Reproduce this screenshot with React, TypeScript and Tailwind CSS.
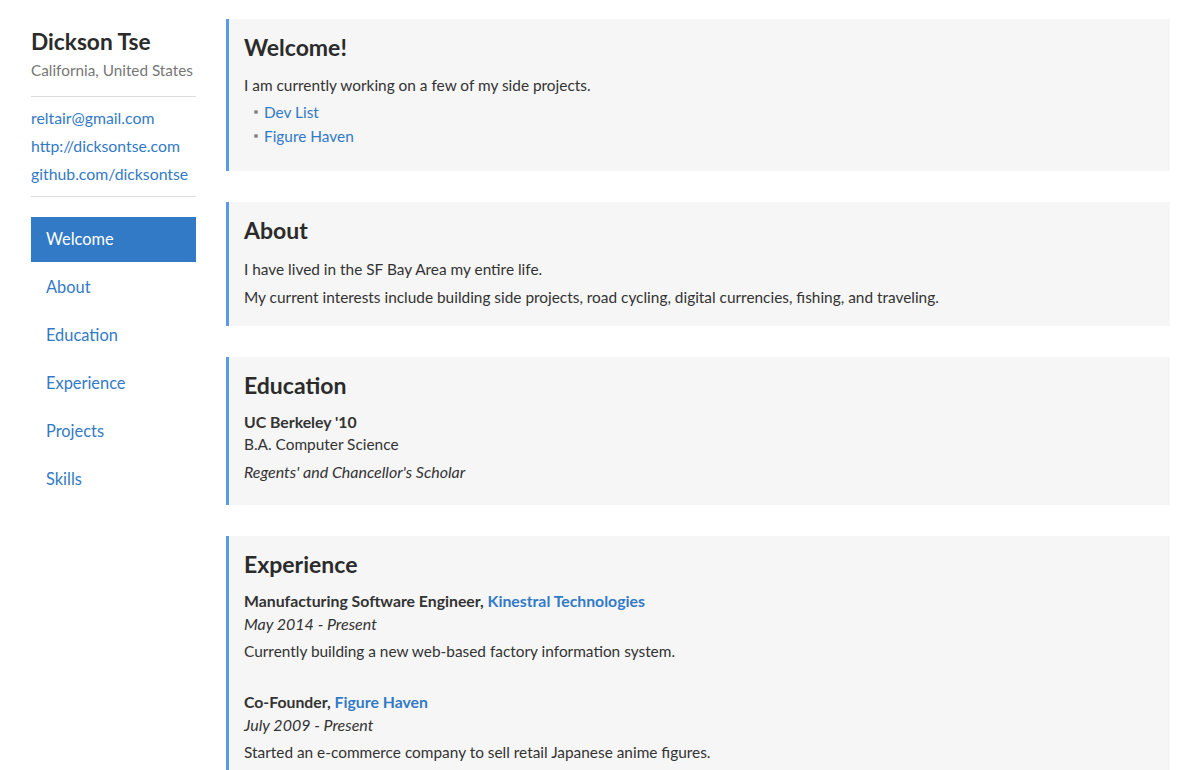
import React from "react";

const font = { fontFamily: "Lato, 'Open Sans', sans-serif" };

const navItems = ["Welcome", "About", "Education", "Experience", "Projects", "Skills"];

function Section({ title, pb, children }: { title: string; pb: string; children: React.ReactNode }) {
  return (
    <section className={"bg-[#f6f6f6] border-l-[3px] border-[#5b9be6] pl-[15px] pr-4 pt-[13px] " + pb}>
      <h2 className="text-[23px] font-bold text-[#2b2b2b] leading-[30px] mb-[10px]">{title}</h2>
      {children}
    </section>
  );
}

export default function App() {
  return (
    <div className="flex bg-white text-[#333] min-h-[770px] text-[15.4px]" style={font}>
      <aside className="w-[165px] ml-[31px] mr-[30px] pt-[28px] shrink-0">
        <h1 className="text-[22.7px] font-bold leading-[28px] text-[#2b2b2b]">Dickson Tse</h1>
        <p className="text-[#777] text-[15.3px] leading-[28px]">California, United States</p>
        <hr className="border-[#ddd] mt-[12px] mb-[7px]" />
        <div className="flex flex-col text-[#337ac6] text-[15.8px] leading-[28px]">
          <a>reltair@gmail.com</a>
          <a>http://dicksontse.com</a>
          <a>github.com/dicksontse</a>
        </div>
        <hr className="border-[#ddd] mt-[8px] mb-[20px]" />
        <nav className="flex flex-col gap-[3px]">
          {navItems.map((item, i) => (
            <a
              key={item}
              className={
                "h-[45px] flex items-center px-[15px] text-[16.4px] " +
                (i === 0 ? "bg-[#337ac6] text-white" : "text-[#337ac6]")
              }
            >
              {item}
            </a>
          ))}
        </nav>
      </aside>

      <main className="flex-1 mr-[30px] pt-[19px] flex flex-col gap-[31px]">
        <Section title="Welcome!" pb="pb-[23px]">
          <p className="leading-[26px]">I am currently working on a few of my side projects.</p>
          <ul className="pl-[10px] leading-[24px] mt-[2px]">
            <li className="flex items-center gap-[6px]">
              <span className="w-[4px] h-[4px] rounded-full bg-[#888]" />
              <a className="text-[#337ac6]">Dev List</a>
            </li>
            <li className="flex items-center gap-[6px]">
              <span className="w-[4px] h-[4px] rounded-full bg-[#888]" />
              <a className="text-[#337ac6]">Figure Haven</a>
            </li>
          </ul>
        </Section>

        <Section title="About" pb="pb-[15px]">
          <p className="leading-[28px]">I have lived in the SF Bay Area my entire life.</p>
          <p className="leading-[28px]">
            My current interests include building side projects, road cycling, digital currencies, fishing, and traveling.
          </p>
        </Section>

        <Section title="Education" pb="pb-[19px]">
          <p className="font-bold text-[15.8px] leading-[23px]">UC Berkeley '10</p>
          <p className="leading-[23px]">B.A. Computer Science</p>
          <p className="italic text-[16px] leading-[28px] mt-[2px]">Regents' and Chancellor's Scholar</p>
        </Section>

        <Section title="Experience" pb="pb-[19px]">
          <p className="font-bold text-[15.8px] leading-[23px]">
            Manufacturing Software Engineer, <a className="text-[#337ac6]">Kinestral Technologies</a>
          </p>
          <p className="italic text-[16px] leading-[23px]">May 2014 - Present</p>
          <p className="leading-[28px] mt-[2px]">Currently building a new web-based factory information system.</p>
          <div className="h-[25px]" />
          <p className="font-bold text-[15.8px] leading-[23px]">
            Co-Founder, <a className="text-[#337ac6]">Figure Haven</a>
          </p>
          <p className="italic text-[16px] leading-[23px]">July 2009 - Present</p>
          <p className="leading-[28px] mt-[2px]">Started an e-commerce company to sell retail Japanese anime figures.</p>
        </Section>
      </main>
    </div>
  );
}
